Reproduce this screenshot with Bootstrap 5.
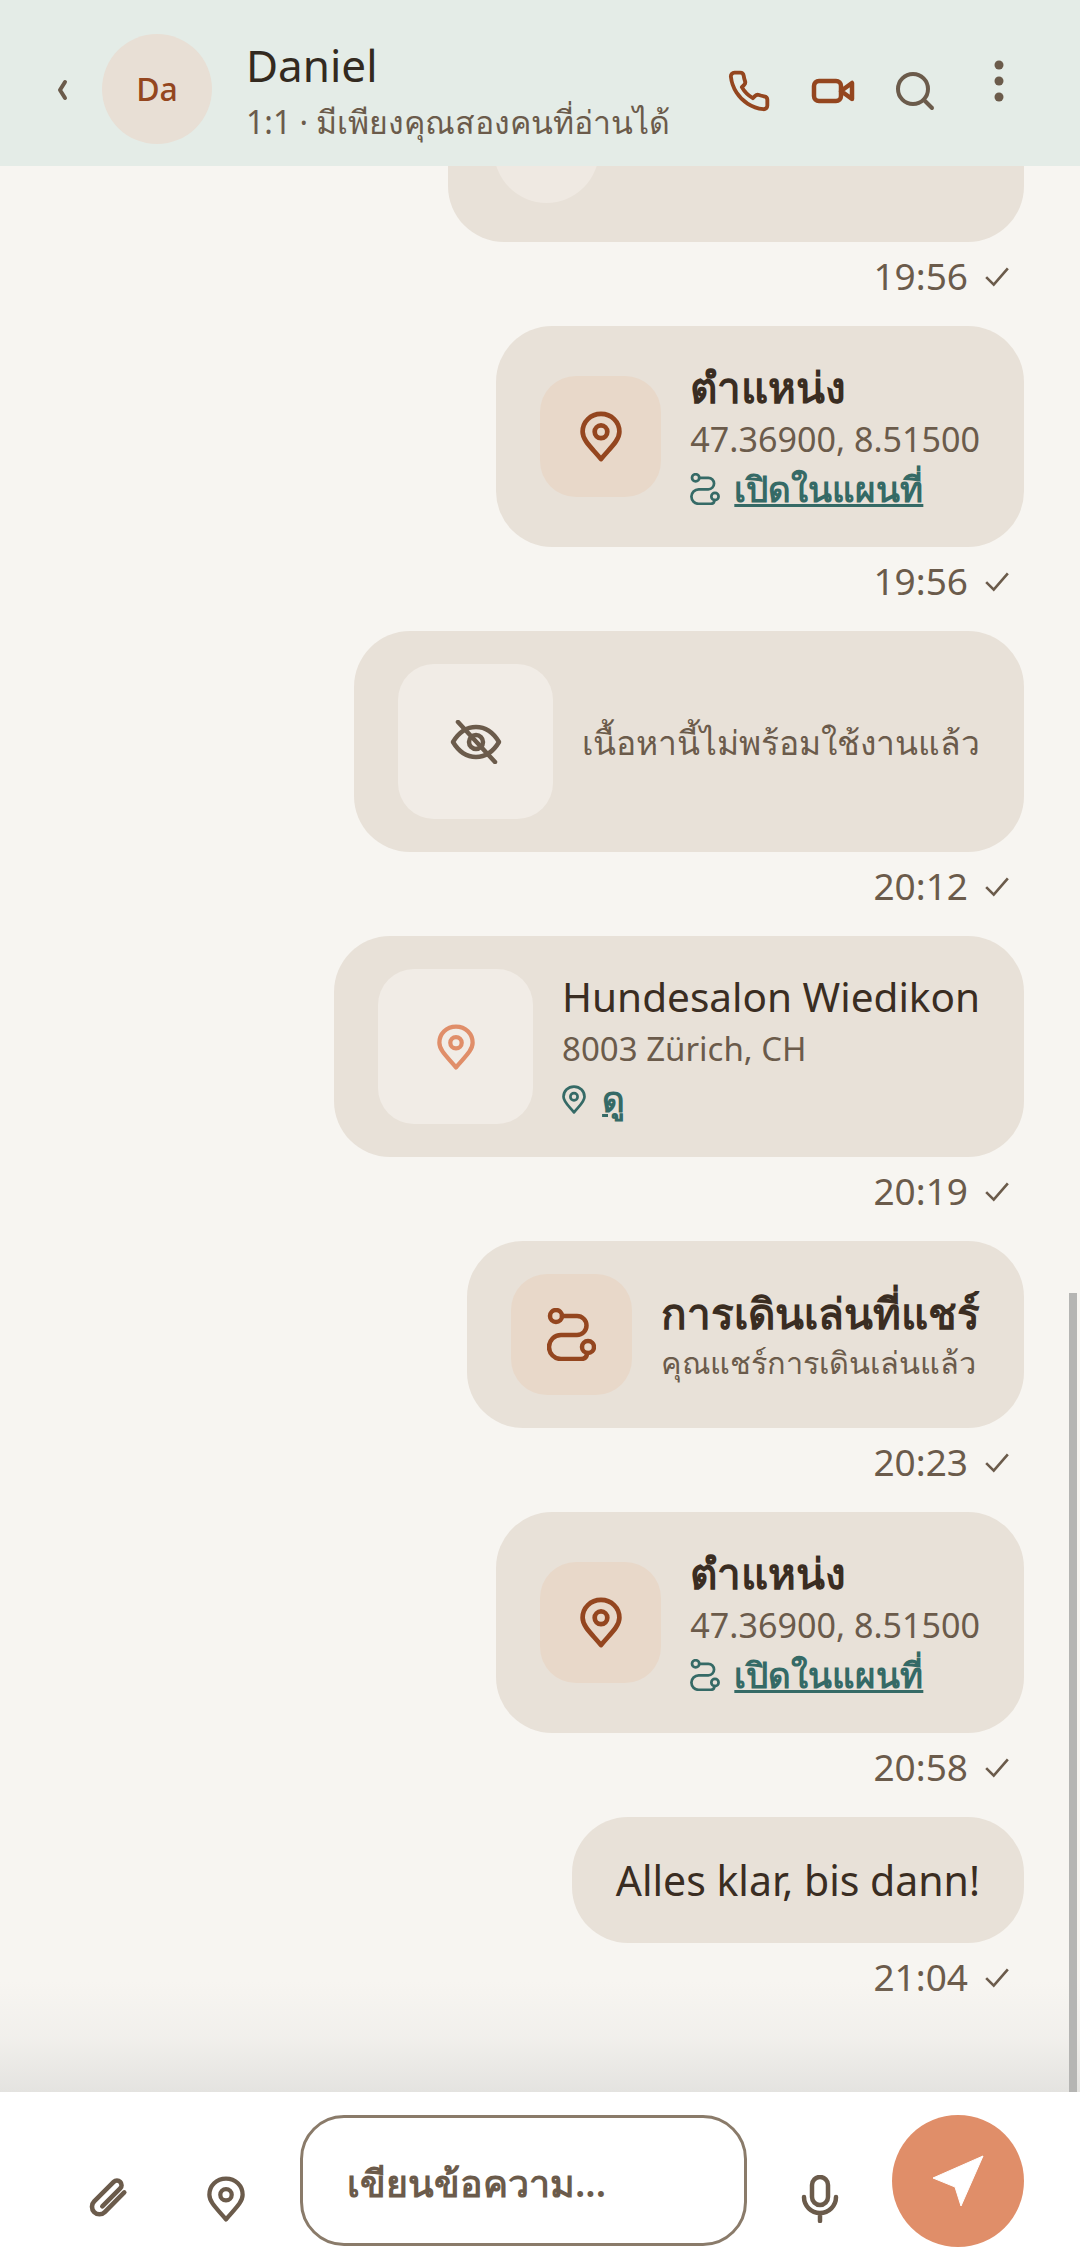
<!DOCTYPE html>
<html lang="th">
<head>
<meta charset="UTF-8">
<title>Daniel</title>
<link href="https://cdn.jsdelivr.net/npm/bootstrap@5.3.2/dist/css/bootstrap.min.css" rel="stylesheet">
<style>
html, body { height: 100%; }
body { font-family: "Noto Sans", "Noto Sans CJK SC", sans-serif; background: #f7f5f1; color: #3a2d22; overflow: hidden; }
.chat-app { width: 1080px; height: 2268px; }
.ic-rust { color: #94461f; }
.ic-teal { color: #356a66; }
.ic-peach { color: #e08e69; }
.ic-mute { color: #6b5b4b; }

.chat-head { height: 166px; background: #e4ece7; padding-left: 54px; padding-right: 75px; z-index: 2; }
.head-back { margin-top: 13px; }
.head-avatar { width: 110px; height: 110px; margin-left: 32px; margin-right: 34px; margin-top: 11px; background: #e8dfd5; color: #94461f; font-size: 32px; font-weight: 500; }
.head-text { margin-top: 15px; }
.head-name { font-size: 44px; line-height: 52px; color: #332a20; }
.head-sub { font-size: 32px; line-height: 42px; color: #6b5b4b; margin-top: 10px; white-space: nowrap; }
.head-acts { margin-top: 15px; gap: 40px; }
.head-acts svg { display: block; }
.head-dots { margin-top: -20px; margin-left: 18px; }

.chat-scroll { min-height: 0; padding: 0 56px 93px 0; }
.chat-msg { margin-top: 28px; }
.msg-bubble { background: #e8e1d8; border-radius: 56px; padding: 33px 44px; gap: 29px; }
.msg-cut { width: 576px; height: 200px; padding-bottom: 39px; padding-left: 46px; }
.msg-tile { width: 121px; height: 121px; border-radius: 36px; background: #e8d8c9; }
.msg-tile-lg { width: 155px; height: 155px; background: #f1ece6; }
.msg-tile-round { width: 105px; height: 105px; border-radius: 50%; background: #efe9e2; }
.msg-title { font-size: 42.300px; line-height: 55px; font-weight: 700; color: #3a2d22; white-space: nowrap; }
.msg-name { font-size: 40.500px; line-height: 55px; color: #3a2d22; white-space: nowrap; }
.msg-sub { font-size: 34.100px; line-height: 50px; color: #6b5b4b; white-space: nowrap; }
.msg-gone { font-size: 33.600px; line-height: 50px; color: #6b5b4b; white-space: nowrap; }
.msg-addr { font-size: 33px; line-height: 50px; color: #6b5b4b; white-space: nowrap; }
.msg-note { font-size: 30.700px; line-height: 45px; color: #6b5b4b; white-space: nowrap; }
.msg-linkrow { gap: 14px; }
.msg-link { font-size: 35px; line-height: 50px; font-weight: 700; color: #356a66; text-decoration: underline; white-space: nowrap; }
.msg-plain { font-size: 41px; line-height: 60px; color: #3a2d22; }
.msg-time { margin-top: 12px; height: 44px; padding-right: 14px; font-size: 37px; line-height: 44px; color: #6b5b4b; gap: 16px; }

.chat-fade { left: 0; right: 0; bottom: 0; height: 110px; background: linear-gradient(to bottom, rgba(228,227,224,0), rgba(228,227,224,.3) 50%, #e4e3e0); }
.chat-bar { top: 1127px; bottom: 0; right: 3px; width: 8px; background: #b5b5b3; }

.chat-foot { height: 176px; background: #fff; padding: 23px 0 0 48px; }
.foot-icon { height: 131px; padding-top: 37px; }
.foot-clip { width: 120px; }
.foot-pin { width: 116px; }
.foot-mic { width: 145px; }
.foot-input.form-control { width: 447px; height: 131px; margin-left: 16px; padding: 4px 44px 0; border: 3px solid #8a7b6a; border-radius: 44px; font-size: 37.500px; font-weight: 600; color: #6b5b4b; }
.foot-input.form-control::placeholder { color: #6b5b4b; opacity: 1; }
.foot-send { width: 132px; height: 132px; padding: 0; border: 0; background: #e08e69; }
</style>
</head>
<body>
<svg width="0" height="0" class="position-absolute">
  <defs>
    <symbol id="ic-pin" viewBox="0 0 40 48"><path d="M20 2.500C10 2.500 2.500 10 2.500 19.500c0 8.500 9.500 16 17.500 26 8-10 17.500-17.500 17.500-26C37.500 10 30 2.500 20 2.500z" fill="none" stroke="currentColor" stroke-width="4.500" stroke-linejoin="round"/><circle cx="20" cy="19.500" r="6" fill="none" stroke="currentColor" stroke-width="4.500"/></symbol>
    <symbol id="ic-route" viewBox="0 0 49 53"><circle cx="9" cy="8" r="6" fill="none" stroke="currentColor" stroke-width="4.500"/><circle cx="41" cy="39" r="6" fill="none" stroke="currentColor" stroke-width="4.500"/><path d="M15 8H30a9.500 9.500 0 0 1 0 19H14a12 12 0 0 0 0 24H34c4 0 6-2 6-6" fill="none" stroke="currentColor" stroke-width="4.500" stroke-linecap="round"/></symbol>
    <symbol id="ic-check" viewBox="0 0 24 24"><path d="M2 13l7 7L22 5" fill="none" stroke="currentColor" stroke-width="2.400"/></symbol>
  </defs>
</svg>

<div class="chat-app d-flex flex-column position-relative">
  <header class="chat-head d-flex align-items-center flex-shrink-0 position-relative">
    <svg class="head-back" width="16" height="22" viewBox="0 0 16 22"><path d="M11 3L6 11l5 8" fill="none" stroke="#6b5b4b" stroke-width="4" stroke-linecap="round" stroke-linejoin="round"/></svg>
    <div class="head-avatar rounded-circle d-flex align-items-center justify-content-center flex-shrink-0">Da</div>
    <div class="head-text flex-grow-1">
      <div class="head-name">Daniel</div>
      <div class="head-sub">1:1 · มีเพียงคุณสองคนที่อ่านได้</div>
    </div>
    <div class="head-acts d-flex align-items-center">
      <svg width="44" height="44" viewBox="0 0 24 24"><path d="M22 16.920v3a2 2 0 0 1-2.180 2 19.790 19.790 0 0 1-8.630-3.070 19.500 19.500 0 0 1-6-6 19.790 19.790 0 0 1-3.070-8.670A2 2 0 0 1 4.110 2h3a2 2 0 0 1 2 1.720 12.840 12.840 0 0 0 .7 2.810 2 2 0 0 1-.45 2.110L8.090 9.910a16 16 0 0 0 6 6l1.270-1.270a2 2 0 0 1 2.110-.45 12.840 12.840 0 0 0 2.810.7A2 2 0 0 1 22 16.920z" fill="none" stroke="#94461f" stroke-width="2.100" stroke-linejoin="round"/></svg>
      <svg width="44" height="28" viewBox="0 0 44 28"><rect x="3" y="4" width="27" height="20" rx="5" fill="none" stroke="#94461f" stroke-width="4.500"/><path d="M30 14l11-8v16z" fill="none" stroke="#94461f" stroke-width="4.500" stroke-linejoin="round"/></svg>
      <svg width="40" height="40" viewBox="0 0 40 40"><circle cx="18" cy="18" r="15" fill="none" stroke="#6b5b4b" stroke-width="4"/><path d="M29 29l8 8" stroke="#6b5b4b" stroke-width="4" stroke-linecap="round"/></svg>
      <svg class="head-dots" width="12" height="42" viewBox="0 0 12 42"><circle cx="6" cy="5" r="4.500" fill="#6b5b4b"/><circle cx="6" cy="21" r="4.500" fill="#6b5b4b"/><circle cx="6" cy="37" r="4.500" fill="#6b5b4b"/></svg>
    </div>
  </header>

  <main class="chat-scroll flex-grow-1 d-flex flex-column justify-content-end align-items-end overflow-hidden position-relative">
    <section class="chat-msg d-flex flex-column align-items-end flex-shrink-0">
      <div class="msg-bubble msg-cut d-flex align-items-end"><div class="msg-tile-round"></div></div>
      <div class="msg-time d-flex align-items-center">19:56 <svg class="ic-mute" width="26" height="26"><use href="#ic-check"/></svg></div>
    </section>

    <section class="chat-msg d-flex flex-column align-items-end flex-shrink-0">
      <div class="msg-bubble d-flex align-items-center">
        <div class="msg-tile d-flex align-items-center justify-content-center"><svg class="ic-rust" width="42" height="51"><use href="#ic-pin"/></svg></div>
        <div>
          <div class="msg-title">ตำแหน่ง</div>
          <div class="msg-sub">47.36900, 8.51500</div>
          <div class="msg-linkrow d-flex align-items-center"><svg class="ic-teal" width="30" height="32"><use href="#ic-route"/></svg><a class="msg-link" href="#">เปิดในแผนที่</a></div>
        </div>
      </div>
      <div class="msg-time d-flex align-items-center">19:56 <svg class="ic-mute" width="26" height="26"><use href="#ic-check"/></svg></div>
    </section>

    <section class="chat-msg d-flex flex-column align-items-end flex-shrink-0">
      <div class="msg-bubble d-flex align-items-center">
        <div class="msg-tile msg-tile-lg d-flex align-items-center justify-content-center">
          <svg width="52" height="44" viewBox="0 0 52 44"><path d="M3 22C9 12 17 7 26 7s17 5 23 15c-6 10-14 15-23 15S9 32 3 22z" fill="none" stroke="#6b5b4b" stroke-width="4.500" stroke-linejoin="round"/><circle cx="26" cy="22" r="7" fill="none" stroke="#6b5b4b" stroke-width="4.500"/><path d="M8 2l37 40" stroke="#6b5b4b" stroke-width="4.500" stroke-linecap="round"/></svg>
        </div>
        <div class="msg-gone">เนื้อหานี้ไม่พร้อมใช้งานแล้ว</div>
      </div>
      <div class="msg-time d-flex align-items-center">20:12 <svg class="ic-mute" width="26" height="26"><use href="#ic-check"/></svg></div>
    </section>

    <section class="chat-msg d-flex flex-column align-items-end flex-shrink-0">
      <div class="msg-bubble d-flex align-items-center">
        <div class="msg-tile msg-tile-lg d-flex align-items-center justify-content-center"><svg class="ic-peach" width="38" height="46"><use href="#ic-pin"/></svg></div>
        <div>
          <div class="msg-name">Hundesalon Wiedikon</div>
          <div class="msg-addr">8003 Zürich, CH</div>
          <div class="d-flex align-items-center gap-3"><svg class="ic-teal" width="24" height="29"><use href="#ic-pin"/></svg><a class="msg-link" href="#">ดู</a></div>
        </div>
      </div>
      <div class="msg-time d-flex align-items-center">20:19 <svg class="ic-mute" width="26" height="26"><use href="#ic-check"/></svg></div>
    </section>

    <section class="chat-msg d-flex flex-column align-items-end flex-shrink-0">
      <div class="msg-bubble d-flex align-items-center">
        <div class="msg-tile d-flex align-items-center justify-content-center"><svg class="ic-rust" width="49" height="53"><use href="#ic-route"/></svg></div>
        <div>
          <div class="msg-title">การเดินเล่นที่แชร์</div>
          <div class="msg-note">คุณแชร์การเดินเล่นแล้ว</div>
        </div>
      </div>
      <div class="msg-time d-flex align-items-center">20:23 <svg class="ic-mute" width="26" height="26"><use href="#ic-check"/></svg></div>
    </section>

    <section class="chat-msg d-flex flex-column align-items-end flex-shrink-0">
      <div class="msg-bubble d-flex align-items-center">
        <div class="msg-tile d-flex align-items-center justify-content-center"><svg class="ic-rust" width="42" height="51"><use href="#ic-pin"/></svg></div>
        <div>
          <div class="msg-title">ตำแหน่ง</div>
          <div class="msg-sub">47.36900, 8.51500</div>
          <div class="msg-linkrow d-flex align-items-center"><svg class="ic-teal" width="30" height="32"><use href="#ic-route"/></svg><a class="msg-link" href="#">เปิดในแผนที่</a></div>
        </div>
      </div>
      <div class="msg-time d-flex align-items-center">20:58 <svg class="ic-mute" width="26" height="26"><use href="#ic-check"/></svg></div>
    </section>

    <section class="chat-msg d-flex flex-column align-items-end flex-shrink-0">
      <div class="msg-bubble msg-plain">Alles klar, bis dann!</div>
      <div class="msg-time d-flex align-items-center">21:04 <svg class="ic-mute" width="26" height="26"><use href="#ic-check"/></svg></div>
    </section>

    <div class="chat-fade position-absolute"></div>
    <div class="chat-bar position-absolute"></div>
  </main>

  <footer class="chat-foot d-flex align-items-start flex-shrink-0">
    <div class="foot-icon foot-clip d-flex align-items-center justify-content-center">
      <svg width="46" height="46" viewBox="-20 -20 40 40"><g transform="rotate(45)"><path d="M6 -14V10a6.500 6.500 0 0 1-13 0V-14a4 4 0 0 1 8 0V8" fill="none" stroke="#6b5b4b" stroke-width="4" stroke-linecap="round"/></g></svg>
    </div>
    <div class="foot-icon foot-pin d-flex align-items-center justify-content-center">
      <svg class="ic-mute" width="38" height="46"><use href="#ic-pin"/></svg>
    </div>
    <input class="form-control foot-input" type="text" placeholder="เขียนข้อความ...">
    <div class="foot-icon foot-mic d-flex align-items-center justify-content-center">
      <svg width="38" height="48" viewBox="0 0 38 48"><rect x="11" y="2" width="16" height="28" rx="8" fill="none" stroke="#6b5b4b" stroke-width="4.500"/><path d="M3 22a16 16 0 0 0 32 0M19 38v8" fill="none" stroke="#6b5b4b" stroke-width="4.500" stroke-linecap="round"/></svg>
    </div>
    <button class="btn foot-send rounded-circle d-flex align-items-center justify-content-center" type="button" aria-label="ส่ง">
      <svg width="132" height="132" viewBox="0 0 132 132"><path d="M91 41L41 63l22 9 6 19z" fill="#fff" stroke="#fff" stroke-linejoin="round"/></svg>
    </button>
  </footer>
</div>
</body>
</html>
